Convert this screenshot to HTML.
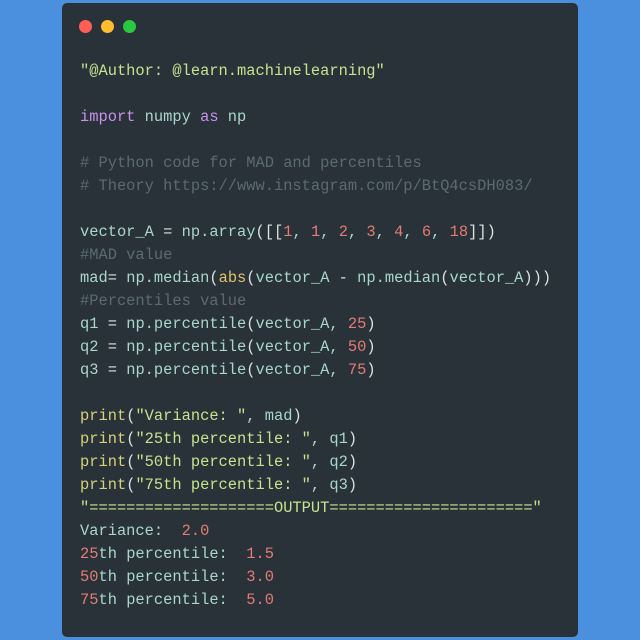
<!DOCTYPE html>
<html><head><meta charset="utf-8"><style>
html,body{margin:0;padding:0;width:640px;height:640px;background:#4b8fdf;overflow:hidden}
.card{position:absolute;left:62px;top:3px;width:516px;height:634px;background:#283238;border-radius:5px}
.dot{position:absolute;top:17px;width:13px;height:13px;border-radius:50%}
pre{position:absolute;left:18px;top:57px;margin:0;font-family:"Liberation Mono",monospace;font-size:15.4px;line-height:23px;color:#a9d6cb}
.s{color:#c5e38f}.k{color:#c792ea}.c{color:#5b6a72}.n{color:#e57b73}.p{color:#d6d27a}.o{color:#d8e3e0}.f{color:#e2c26a}
</style></head><body>
<div class="card">
<div class="dot" style="left:17px;background:#fd5f57"></div>
<div class="dot" style="left:39px;background:#febc2e"></div>
<div class="dot" style="left:61px;background:#28c840"></div>
<pre><span class="s">"@Author: @learn.machinelearning"</span>

<span class="k">import</span> numpy <span class="k">as</span> np

<span class="c"># Python code for MAD and percentiles</span>
<span class="c"># Theory https://www.instagram.com/p/BtQ4csDH083/</span>

vector_A <span class="o">=</span> np.array<span class="o">([[</span><span class="n">1</span>, <span class="n">1</span>, <span class="n">2</span>, <span class="n">3</span>, <span class="n">4</span>, <span class="n">6</span>, <span class="n">18</span><span class="o">]])</span>
<span class="c">#MAD value</span>
mad<span class="o">=</span> np.median<span class="o">(</span><span class="f">abs</span><span class="o">(</span>vector_A <span class="o">-</span> np.median<span class="o">(</span>vector_A<span class="o">)))</span>
<span class="c">#Percentiles value</span>
q1 <span class="o">=</span> np.percentile<span class="o">(</span>vector_A, <span class="n">25</span><span class="o">)</span>
q2 <span class="o">=</span> np.percentile<span class="o">(</span>vector_A, <span class="n">50</span><span class="o">)</span>
q3 <span class="o">=</span> np.percentile<span class="o">(</span>vector_A, <span class="n">75</span><span class="o">)</span>

<span class="p">print</span><span class="o">(</span><span class="s">"Variance: "</span>, mad<span class="o">)</span>
<span class="p">print</span><span class="o">(</span><span class="s">"25th percentile: "</span>, q1<span class="o">)</span>
<span class="p">print</span><span class="o">(</span><span class="s">"50th percentile: "</span>, q2<span class="o">)</span>
<span class="p">print</span><span class="o">(</span><span class="s">"75th percentile: "</span>, q3<span class="o">)</span>
<span class="s">"====================OUTPUT======================"</span>
Variance:  <span class="n">2.0</span>
<span class="n">25</span>th percentile:  <span class="n">1.5</span>
<span class="n">50</span>th percentile:  <span class="n">3.0</span>
<span class="n">75</span>th percentile:  <span class="n">5.0</span></pre>
</div>
</body></html>
